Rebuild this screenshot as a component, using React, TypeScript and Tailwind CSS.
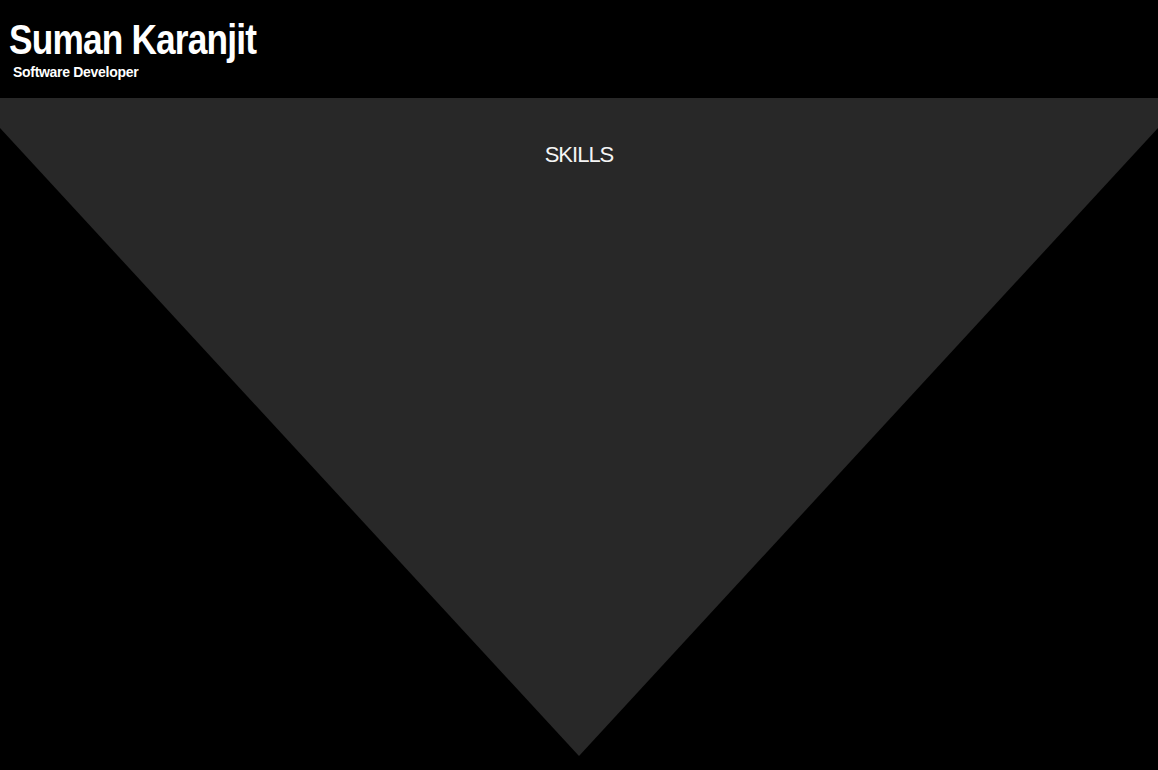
import React from 'react';

export default function App() {
  return (
    <div className="min-h-[770px] bg-black font-['Liberation_Sans',Arial,sans-serif] text-white">
      <header className="h-[98px] pt-[18px] pl-[9px]">
        {/* reference title uses a condensed face; squeeze Liberation Sans to match */}
        <h1 className="origin-left scale-x-[0.82] text-[43px] leading-none font-bold tracking-[-1px]">
          Suman Karanjit
        </h1>
        <p className="mt-[4px] ml-[4px] text-[14px] leading-none font-bold tracking-[-0.3px]">Software Developer</p>
      </header>

      <section className="h-[658px] bg-[#282828] pt-[46px] [clip-path:polygon(0_0,100%_0,100%_30px,50%_100%,0_30px)]">
        <h2 className="text-center text-[22px] leading-none tracking-[-1px] text-[#f5f5f5]">SKILLS</h2>
      </section>
    </div>
  );
}
